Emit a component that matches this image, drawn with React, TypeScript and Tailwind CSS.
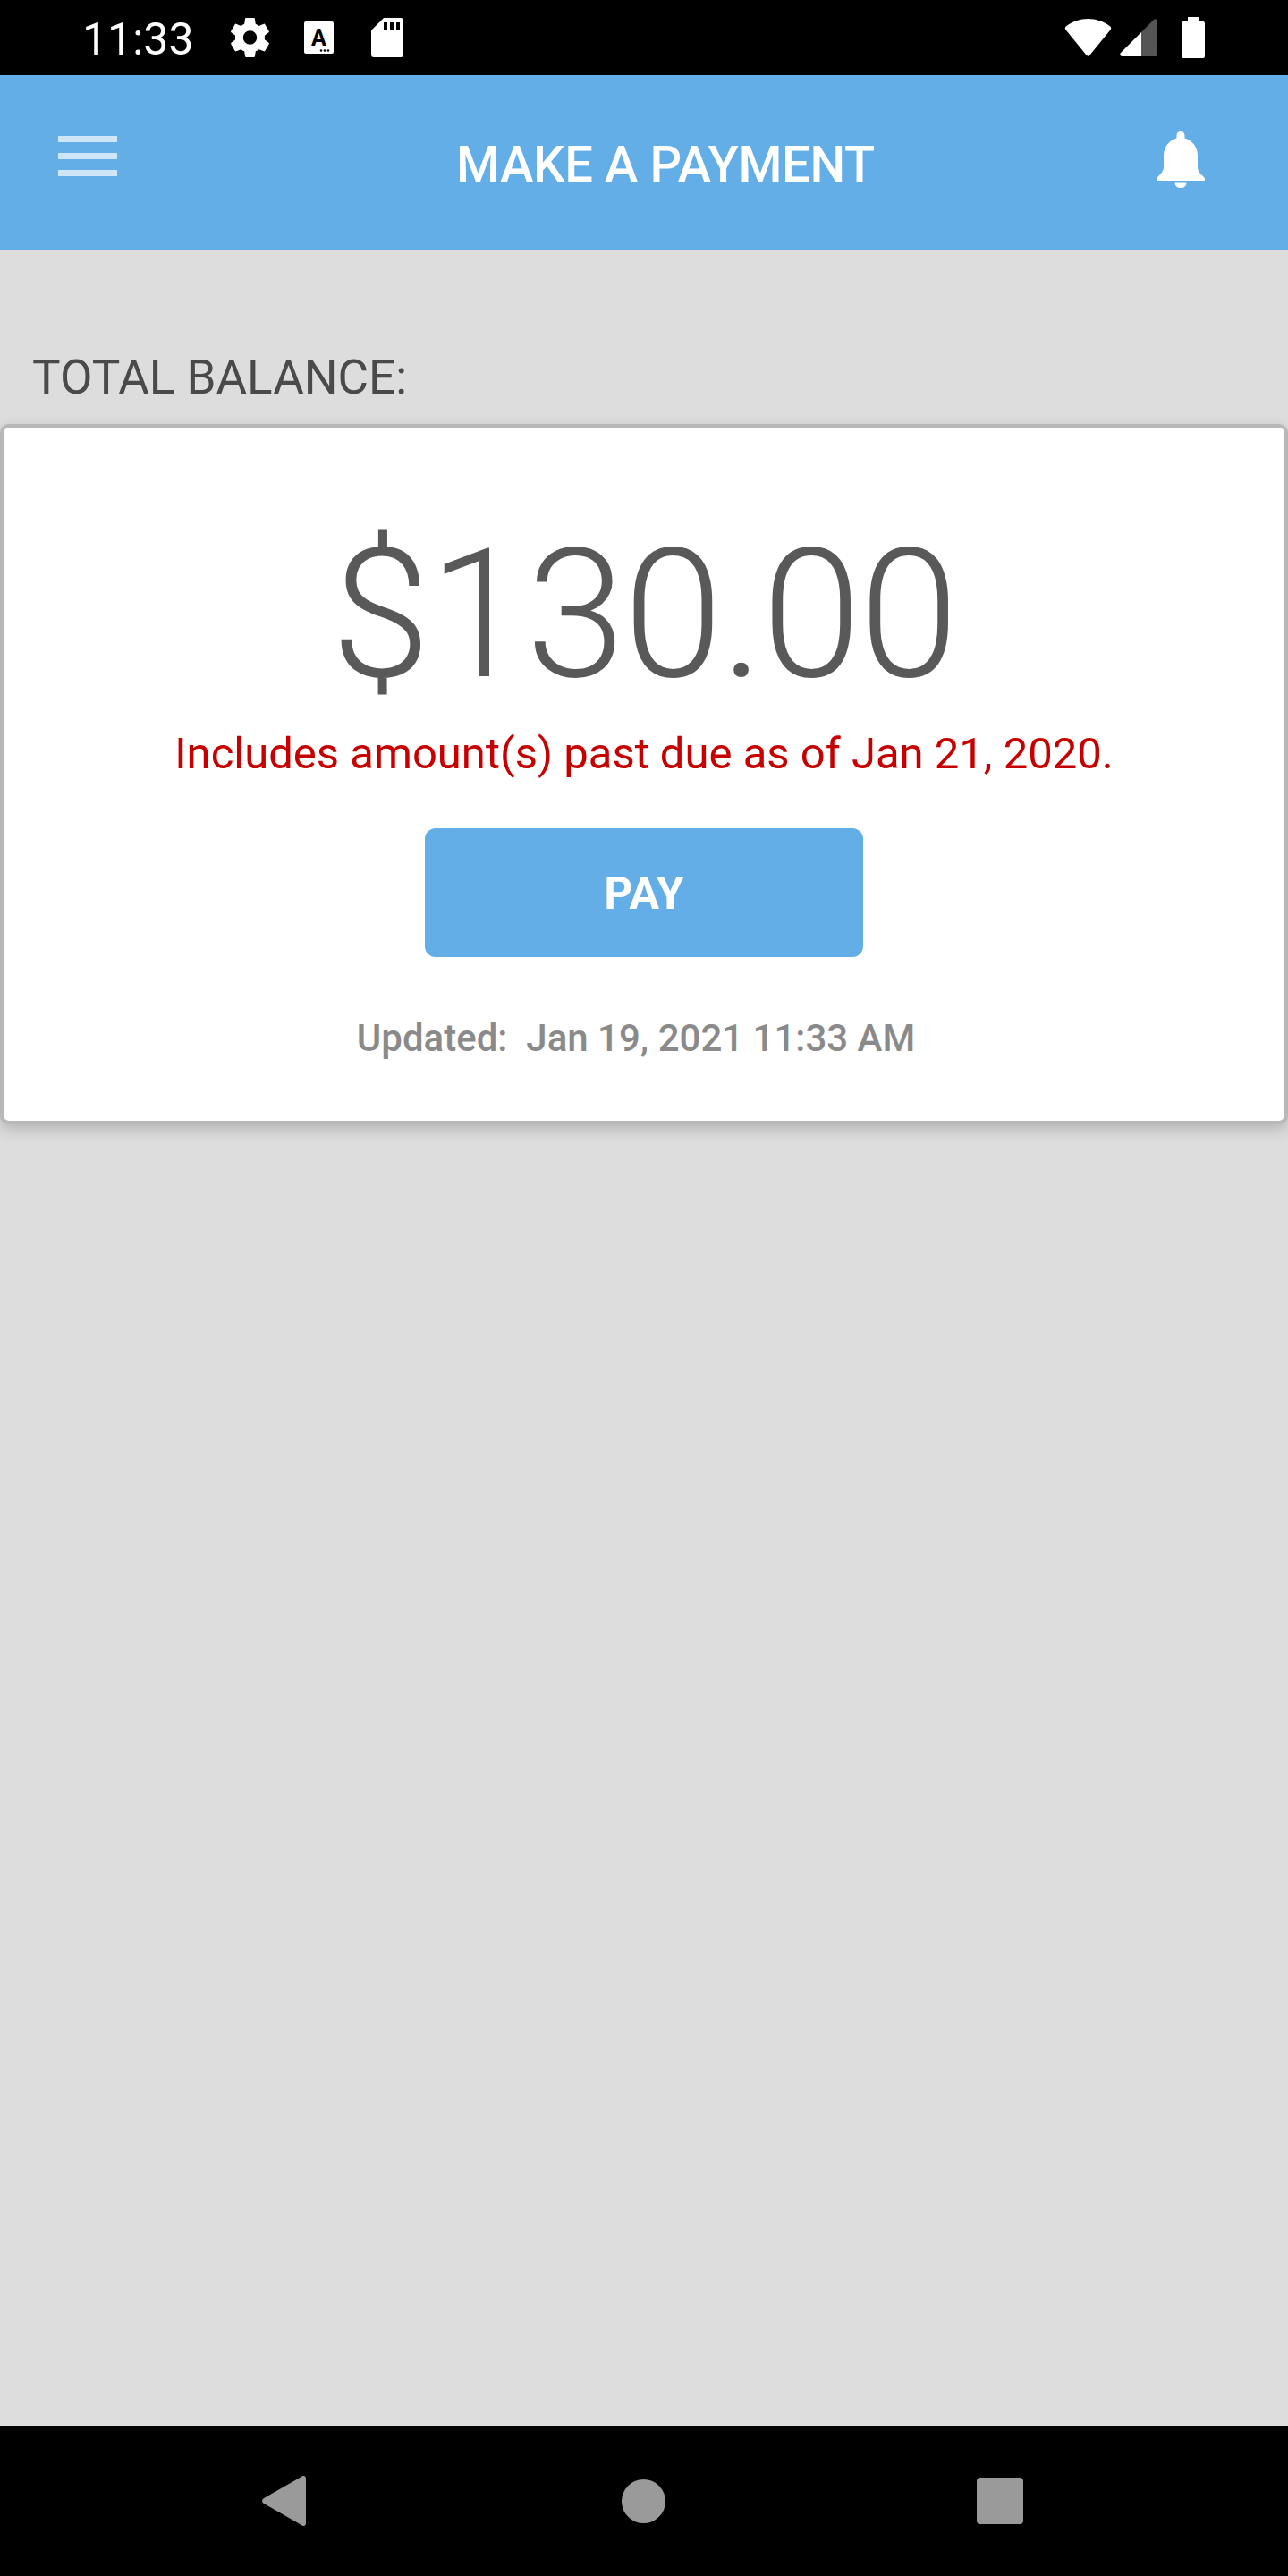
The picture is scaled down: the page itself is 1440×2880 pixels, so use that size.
import React from "react";

const roboto = { fontFamily: "Roboto, sans-serif" };

const GearIcon = () => (
  <svg viewBox="2.3 2 19.4 20" className="w-[43px] h-[44px]" fill="#fff">
    <path d="M19.4 13c.04-.32.07-.66.07-1s-.03-.68-.07-1l2.1-1.64a.5.5 0 0 0 .12-.64l-2-3.46a.5.5 0 0 0-.61-.22l-2.49 1a7.3 7.3 0 0 0-1.69-.98l-.38-2.65A.49.49 0 0 0 14 2h-4a.49.49 0 0 0-.49.42l-.38 2.65c-.61.25-1.17.59-1.69.98l-2.49-1a.5.5 0 0 0-.61.22l-2 3.46a.49.49 0 0 0 .12.64L4.57 11c-.04.32-.07.66-.07 1s.03.68.07 1l-2.11 1.65a.5.5 0 0 0-.12.64l2 3.46c.12.22.39.3.61.22l2.49-1c.52.4 1.08.73 1.69.98l.38 2.65c.03.24.24.42.49.42h4c.25 0 .46-.18.49-.42l.38-2.65c.61-.25 1.17-.59 1.69-.98l2.49 1c.23.09.49 0 .61-.22l2-3.46a.5.5 0 0 0-.12-.64L19.4 13zM12 15.5a3.5 3.5 0 1 1 0-7 3.5 3.5 0 0 1 0 7z" />
  </svg>
);

const KeyboardCardIcon = () => (
  <svg viewBox="0 0 33 36" className="w-[33px] h-[36px] ml-[39px]">
    <rect width="33" height="36" rx="2" fill="#fff" />
    <text x="16.5" y="27" fontSize="25" fontWeight="700" textAnchor="middle" fill="#000" fontFamily="Roboto, sans-serif">
      A
    </text>
    <circle cx="19" cy="32.5" r="1.3" fill="#000" />
    <circle cx="23" cy="32.5" r="1.3" fill="#000" />
    <circle cx="27" cy="32.5" r="1.3" fill="#000" />
  </svg>
);

const SdCardIcon = () => (
  <svg viewBox="0 0 36 44" className="w-[36px] h-[44px] ml-[42px]">
    <path d="M14 0 H33 a3 3 0 0 1 3 3 V41 a3 3 0 0 1 -3 3 H3 a3 3 0 0 1 -3 -3 V14 Z" fill="#fff" />
    <rect x="14" y="5" width="4" height="9" fill="#000" />
    <rect x="21" y="5" width="4" height="9" fill="#000" />
    <rect x="28" y="5" width="4" height="9" fill="#000" />
  </svg>
);

const WifiIcon = () => (
  <svg viewBox="0 0 53 42" className="w-[53px] h-[42px]">
    <path d="M0.8 10.5 C1 9.5 1.5 8.6 2.3 8 C9 3 17.5 0 26.5 0 C35.5 0 44 3 50.7 8 C51.5 8.6 52 9.5 52.2 10.5 C52.2 11 52 11.5 51.7 12 L28.5 40.5 C27.5 42 25.5 42 24.5 40.5 L1.3 12 C1 11.5 0.8 11 0.8 10.5 Z" fill="#fff" />
  </svg>
);

const SignalIcon = () => (
  <svg viewBox="0 0 42 42" className="w-[42px] h-[42px] ml-[9px]">
    <path d="M24 15 L38 1 C39.5 -0.5 42 0.5 42 2.5 V40 a2 2 0 0 1 -2 2 H24 Z" fill="#555" />
    <path d="M24 15 V42 H2.5 C0.5 42 -0.5 39.5 1 38 Z" fill="#fff" />
  </svg>
);

const BatteryIcon = () => (
  <svg viewBox="0 0 26 46" className="w-[26px] h-[46px] ml-[27px]">
    <path d="M7 0 H19 V5 H24 a2 2 0 0 1 2 2 V44 a2 2 0 0 1 -2 2 H2 a2 2 0 0 1 -2 -2 V7 a2 2 0 0 1 2 -2 H7 Z" fill="#fff" />
  </svg>
);

const BellIcon = () => (
  <svg viewBox="0 0 54 63" className="w-[54px] h-[63px]" fill="#fff">
    <path d="M27 0 C24.2 0 22.5 2 22.5 4.5 V7.5 C13.5 10 8 18 8 27 V40 C8 44 5 47.5 1 51 C0 52 0 53.5 0 55 H54 C54 53.5 54 52 53 51 C49 47.5 46 44 46 40 V27 C46 18 40.5 10 31.5 7.5 V4.5 C31.5 2 29.8 0 27 0 Z" />
    <path d="M20.5 57.5 H33.5 C33.5 61 30.5 63 27 63 C23.5 63 20.5 61 20.5 57.5 Z" />
  </svg>
);

const BackIcon = () => (
  <svg viewBox="0 0 49 56" className="w-[49px] h-[56px]" fill="#9a9a9a">
    <path d="M44 1 C46 -1 49 0 49 3 V53 C49 56 46 57 44 55 L2 31 C-0.5 29.5 -0.5 26.5 2 25 Z" />
  </svg>
);

export default function App() {
  return (
    <div className="flex flex-col w-[1440px] h-[2880px] bg-[#dddddd]" style={roboto}>
      {/* status bar */}
      <div className="flex items-center h-[84px] bg-black pl-[92px] pr-[93px]">
        <span className="text-[50px] leading-none text-white w-[166px] mt-[4px]">11:33</span>
        <GearIcon />
        <KeyboardCardIcon />
        <SdCardIcon />
        <div className="flex-1" />
        <WifiIcon />
        <SignalIcon />
        <BatteryIcon />
      </div>

      {/* header */}
      <div className="flex items-center justify-between h-[196px] bg-[#64aee8] pl-[65px] pr-[93px]">
        <div className="flex flex-col gap-[12px] w-[66px] mb-[16px]">
          <div className="h-[7px] bg-[#cfe6f9]" />
          <div className="h-[7px] bg-[#cfe6f9]" />
          <div className="h-[7px] bg-[#cfe6f9]" />
        </div>
        <span className="text-[56px] leading-none font-medium tracking-[-0.3px] text-white mb-[-4px] ml-[64px]">MAKE A PAYMENT</span>
        <div className="mb-[8px]">
          <BellIcon />
        </div>
      </div>

      {/* balance */}
      <div className="flex-1">
        <p className="text-[53px] leading-none text-[#4a4a4a] pl-[36px] pt-[116px]">TOTAL BALANCE:</p>
        <div className="flex flex-col items-center mt-[25px] h-[783px] bg-white rounded-[10px] border-[4px] border-[#b8b8b8] shadow-[0_6px_16px_rgba(0,0,0,0.18)]">
          <p className="text-[200px] leading-none font-light tracking-[-2px] text-[#595959] mt-[110px]">$130.00</p>
          <p className="text-[49px] leading-none text-[#c60000] mt-[30px]">Includes amount(s) past due as of Jan 21, 2020.</p>
          <button className="flex items-center justify-center w-[490px] h-[144px] mt-[59px] pt-[3px] bg-[#64aee8] rounded-[12px] text-[50px] font-bold text-white">
            PAY
          </button>
          <p className="text-[42px] leading-none font-medium text-[#8a8a8a] mt-[70px] mr-[18px] whitespace-pre">Updated:  Jan 19, 2021 11:33 AM</p>
        </div>
      </div>

      {/* nav bar */}
      <div className="flex items-center h-[168px] bg-black pl-[293px]">
        <BackIcon />
        <div className="w-[49px] h-[49px] rounded-full bg-[#9a9a9a] ml-[353px]" />
        <div className="w-[52px] h-[52px] rounded-[4px] bg-[#9a9a9a] ml-[348px]" />
      </div>
    </div>
  );
}
